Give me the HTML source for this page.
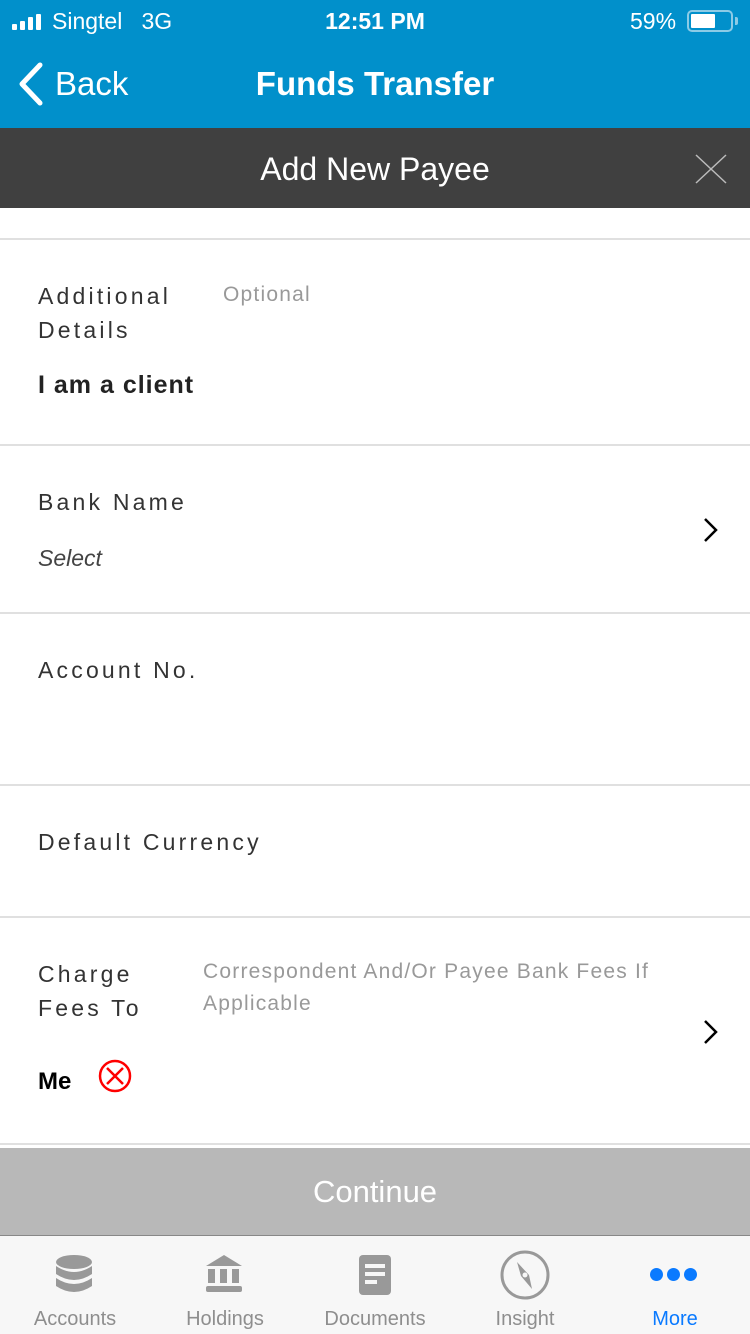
<!DOCTYPE html>
<html><head><meta charset="utf-8"><style>
*{margin:0;padding:0;box-sizing:border-box}
body{width:750px;height:1334px;position:relative;background:#fff;font-family:"Liberation Sans",sans-serif;overflow:hidden}
.a{position:absolute}
.lbl{position:absolute;left:38px;font-size:23px;letter-spacing:3.2px;color:#333;line-height:34px}
.hr{position:absolute;left:0;width:750px;height:2px;background:#e0e0e0}
.gray{color:#999;font-size:21px;letter-spacing:1.2px}
.tab{position:absolute;top:1304px;width:150px;text-align:center;font-size:20px;color:#8e8e8e;line-height:30px}
</style></head><body>
<div class="a" style="left:0;top:0;width:750px;height:128px;background:#0190cb"></div>
<div class="a" style="left:12px;top:14px;">
 <div class="a" style="left:0;top:10px;width:5px;height:6px;background:#fff;border-radius:1px"></div>
 <div class="a" style="left:8px;top:7px;width:5px;height:9px;background:#fff;border-radius:1px"></div>
 <div class="a" style="left:16px;top:3px;width:5px;height:13px;background:#fff;border-radius:1px"></div>
 <div class="a" style="left:24px;top:0;width:5px;height:16px;background:#fff;border-radius:1px"></div>
</div>
<div class="a" style="left:52px;top:6px;color:#fff;font-size:23px;line-height:30px">Singtel&nbsp;&nbsp;&nbsp;3G</div>
<div class="a" style="left:0;top:6px;width:750px;text-align:center;color:#fff;font-size:23px;font-weight:bold;line-height:30px">12:51 PM</div>
<div class="a" style="left:630px;top:6px;color:#fff;font-size:23px;line-height:30px">59%</div>
<div class="a" style="left:687px;top:10px;width:46px;height:22px;border:2px solid #8ccbe6;border-radius:5px"><div class="a" style="left:2px;top:2px;width:24px;height:14px;background:#fff;border-radius:1px"></div></div>
<div class="a" style="left:735px;top:17px;width:3px;height:8px;background:#8ccbe6;border-radius:0 2px 2px 0"></div>
<svg class="a" style="left:16px;top:62px" width="28" height="44"><path d="M24 3 L6 22 L24 41" stroke="#fff" stroke-width="5" fill="none" stroke-linecap="round" stroke-linejoin="round"/></svg>
<div class="a" style="left:55px;top:64px;color:#fff;font-size:33px;line-height:40px">Back</div>
<div class="a" style="left:0;top:64px;width:750px;text-align:center;color:#fff;font-size:33px;font-weight:bold;line-height:40px">Funds Transfer</div>
<div class="a" style="left:0;top:128px;width:750px;height:80px;background:#404040"></div>
<div class="a" style="left:0;top:149px;width:750px;text-align:center;color:#fff;font-size:32px;line-height:40px">Add New Payee</div>
<svg class="a" style="left:695px;top:154px" width="32" height="30"><path d="M1 1 L31 29 M31 1 L1 29" stroke="#bbb" stroke-width="1.5"/></svg>

<div class="hr" style="top:238px"></div>
<div class="lbl" style="top:279px">Additional<br>Details</div>
<div class="a gray" style="left:223px;top:280px;line-height:30px">Optional</div>
<div class="a" style="left:38px;top:368px;font-size:25px;font-weight:bold;color:#222;letter-spacing:1px;line-height:34px">I am a client</div>
<div class="hr" style="top:444px"></div>
<div class="lbl" style="top:485px">Bank Name</div>
<div class="a" style="left:38px;top:541px;font-size:23px;font-style:italic;color:#444;line-height:34px">Select</div>
<svg class="a" style="left:702px;top:517px" width="16" height="26"><path d="M3 2 L14 13 L3 24" stroke="#000" stroke-width="2.5" fill="none"/></svg>
<div class="hr" style="top:612px"></div>
<div class="lbl" style="top:653px">Account No.</div>
<div class="hr" style="top:784px"></div>
<div class="lbl" style="top:825px">Default Currency</div>
<div class="hr" style="top:916px"></div>
<div class="lbl" style="top:957px;line-height:34px">Charge<br>Fees To</div>
<div class="a gray" style="left:203px;top:956px;line-height:32px;width:520px">Correspondent And/Or Payee Bank Fees If Applicable</div>
<svg class="a" style="left:702px;top:1019px" width="16" height="26"><path d="M3 2 L14 13 L3 24" stroke="#000" stroke-width="2.5" fill="none"/></svg>
<div class="a" style="left:38px;top:1065px;font-size:24px;font-weight:bold;color:#000;line-height:34px">Me</div>
<svg class="a" style="left:97px;top:1058px" width="36" height="36"><circle cx="18" cy="18" r="15" stroke="#f00" stroke-width="2.5" fill="none"/><path d="M10 10 L26 26 M26 10 L10 26" stroke="#f00" stroke-width="2.5"/></svg>
<div class="hr" style="top:1143px"></div>
<div class="a" style="left:0;top:1148px;width:750px;height:87px;background:#b8b8b8;color:#fff;font-size:31px;text-align:center;line-height:88px">Continue</div>
<div class="a" style="left:0;top:1235px;width:750px;height:99px;background:#f7f7f7;border-top:1px solid #888"></div>
<svg class="a" style="left:54px;top:1254px" width="40" height="42"><ellipse cx="20" cy="8" rx="18" ry="7" fill="#999"/><path d="M2 12 Q20 24 38 12 V20 Q20 32 2 20Z" fill="#999"/><path d="M2 24 Q20 36 38 24 V32 Q20 44 2 32Z" fill="#999"/></svg>
<svg class="a" style="left:204px;top:1254px" width="40" height="40"><path d="M20 1 L38 12 H2Z" fill="#999"/><rect x="4" y="15" width="7" height="14" fill="#999"/><rect x="16" y="15" width="7" height="14" fill="#999"/><rect x="28" y="15" width="7" height="14" fill="#999"/><rect x="2" y="32" width="36" height="6" rx="2" fill="#999"/></svg>
<svg class="a" style="left:358px;top:1254px" width="34" height="42"><rect x="1" y="1" width="32" height="40" rx="4" fill="#999"/><rect x="7" y="10" width="20" height="4" fill="#f7f7f7"/><rect x="7" y="18" width="20" height="4" fill="#f7f7f7"/><rect x="7" y="26" width="12" height="4" fill="#f7f7f7"/></svg>
<svg class="a" style="left:499px;top:1249px" width="52" height="52"><circle cx="26" cy="26" r="23" stroke="#999" stroke-width="3" fill="none"/><path d="M18 13 L30 26 L33 40 L22 27Z" fill="#999"/><circle cx="26" cy="26" r="2.5" fill="#f7f7f7"/></svg>
<div class="a" style="left:650px;top:1268px;width:48px;height:14px">
 <div class="a" style="left:0;top:0;width:13px;height:13px;border-radius:50%;background:#0a7aff"></div>
 <div class="a" style="left:17px;top:0;width:13px;height:13px;border-radius:50%;background:#0a7aff"></div>
 <div class="a" style="left:34px;top:0;width:13px;height:13px;border-radius:50%;background:#0a7aff"></div>
</div>
<div class="tab" style="left:0">Accounts</div>
<div class="tab" style="left:150px">Holdings</div>
<div class="tab" style="left:300px">Documents</div>
<div class="tab" style="left:450px">Insight</div>
<div class="tab" style="left:600px;color:#0a7aff">More</div>
</body></html>
